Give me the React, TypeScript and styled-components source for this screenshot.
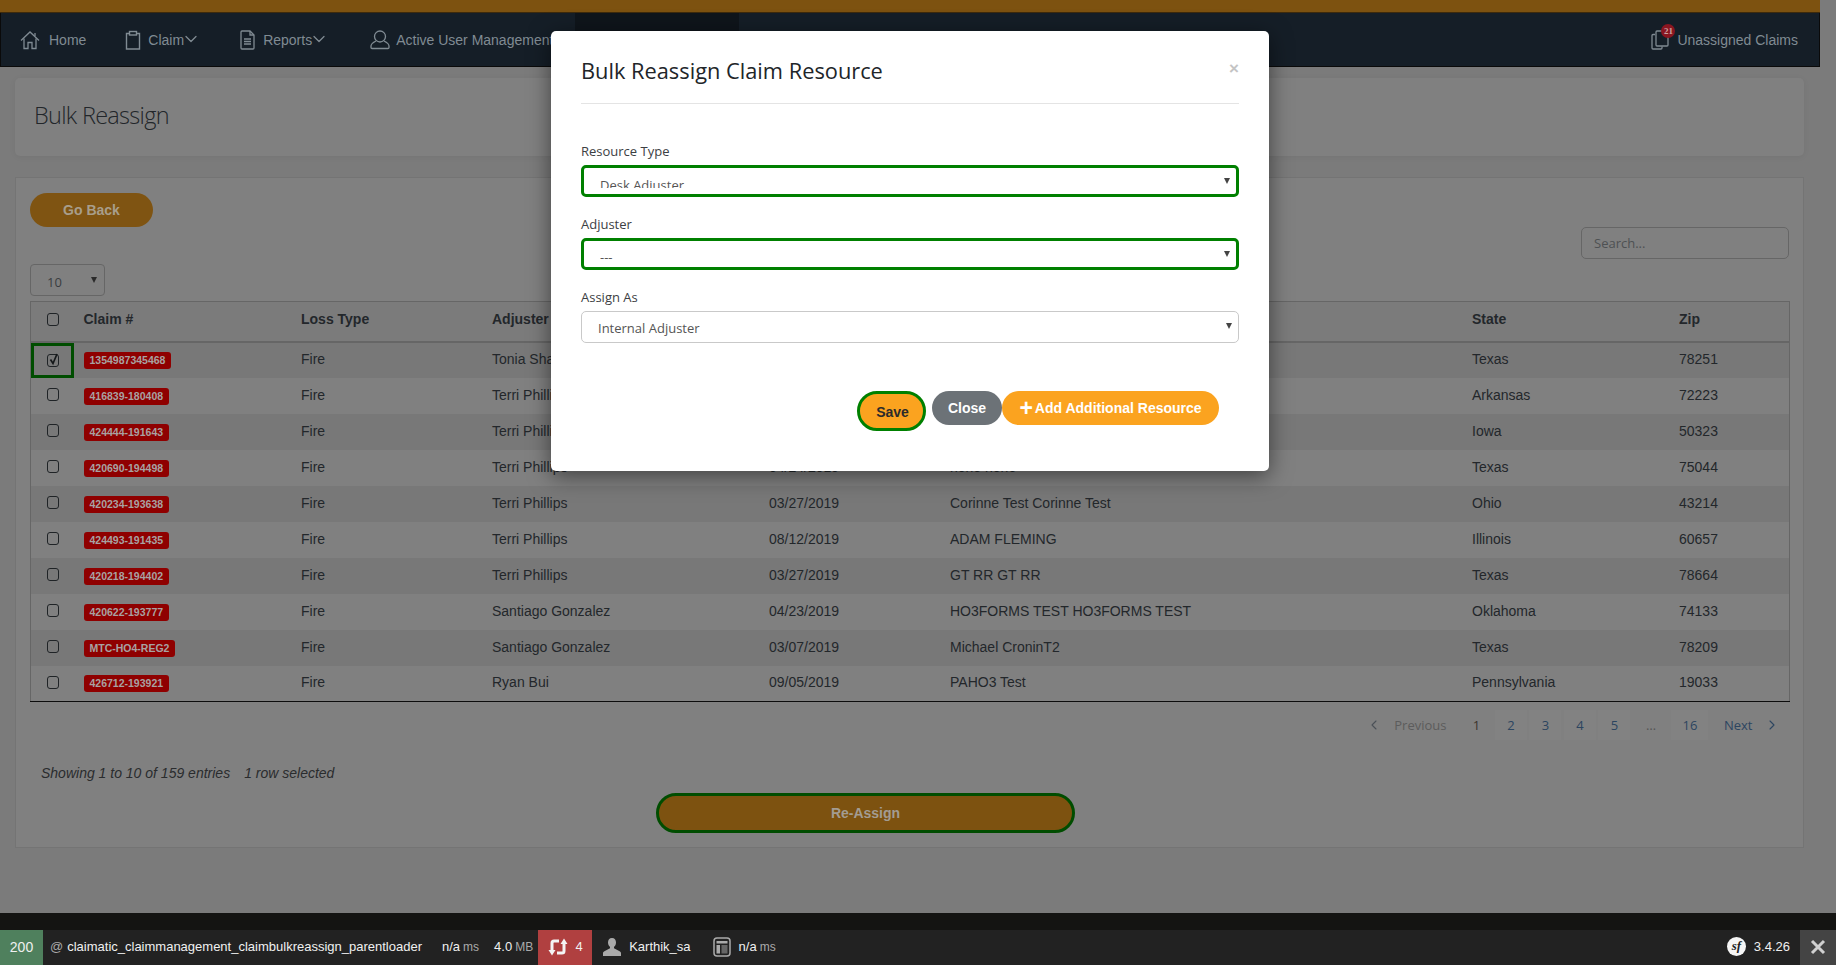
import React from "react";
import styled, { createGlobalStyle } from "styled-components";
import { ChevronDown, ChevronLeft, ChevronRight, FileCheck } from "lucide-react";

const Global = createGlobalStyle`
  html, body { margin: 0; padding: 0; height: 965px; overflow: hidden; background: #7b7b7b; }
  * { box-sizing: border-box; }
  body { font-family: "Liberation Sans", Arial, sans-serif; font-size: 14px; }
`;

const Page = styled.div`
  position: relative;
  width: 1836px;
  height: 965px;
  overflow: hidden;
  display: flex;
  flex-direction: column;
`;
const Underlay = styled.div`
  flex: 1;
  width: 1820px;
  display: flex;
  flex-direction: column;
`;
const TopStrip = styled.div`
  height: 13px;
  background: #7d5210;
  border-bottom: 1px solid #3d2a0c;
`;
const Nav = styled.nav`
  height: 54px;
  background: #151e27;
  border: 1px solid #0a0a0a;
  border-top: 0;
  display: flex;
  align-items: stretch;
  padding-left: 19px;
  color: #808b93;
`;
const NavItem = styled.div<{ $gap?: number; $active?: boolean; $width?: number }>`
  display: flex;
  align-items: center;
  white-space: nowrap;
  font-size: 14px;
  margin-left: ${(p) => p.$gap ?? 0}px;
  ${(p) => (p.$width ? `width: ${p.$width}px; flex: none;` : "")}
  ${(p) => (p.$active ? "background: #0f151b; padding-left: 31px; overflow: hidden;" : "")}
  svg { flex: none; }
`;
const NavLabel = styled.span<{ $left: number }>`
  margin-left: ${(p) => p.$left}px;
  margin-top: 1px;
`;
const NavChevron = styled(ChevronDown)`
  margin: -2px -5px 0 -3px;
`;
const ActiveIcon = styled.span`
  display: flex;
  color: #b07a20;
`;
const NavSpacer = styled.div`
  flex: 1;
`;
const ClaimsLink = styled.div`
  position: relative;
  display: flex;
  align-items: center;
  padding-right: 21px;
`;
const CountBadge = styled.span`
  position: absolute;
  left: 10px;
  top: 11px;
  width: 14px;
  height: 14px;
  border-radius: 50%;
  background: #8a1520;
  color: #c9a0a0;
  font: 700 9px/14px "Liberation Serif", serif;
  text-align: center;
`;

const Content = styled.main`
  flex: 1;
  padding: 11px 16px 0 15px;
  display: flex;
  flex-direction: column;
  gap: 21px;
`;
const TitleCard = styled.section`
  height: 78px;
  background: #808080;
  border-radius: 5px;
  box-shadow: 0 1px 6px rgba(0, 0, 0, 0.06);
  padding: 0 19px;
  display: flex;
  align-items: center;
`;
const PageTitle = styled.h1`
  margin: 0 0 5px;
  font: 300 23.5px "Open Sans", sans-serif;
  letter-spacing: -0.7px;
  color: #22262a;
`;
const MainCard = styled.section`
  height: 671px;
  background: #808080;
  border: 1px solid #747474;
  padding: 15px 14px 0;
  display: flex;
  flex-direction: column;
`;
const GoBack = styled.button`
  width: 123px;
  height: 34px;
  border: 0;
  border-radius: 17px;
  background: #7f5412;
  color: #a89e8b;
  font: 700 14px "Liberation Sans", sans-serif;
  padding: 0;
`;
const Filters = styled.div`
  display: flex;
  justify-content: space-between;
  align-items: flex-start;
  height: 74px;
`;
const Length = styled.div`
  position: relative;
  width: 75px;
  height: 32px;
  margin-top: 37px;
  border: 1px solid #666;
  border-radius: 4px;
  padding-left: 16px;
  font: 13px/34px "Open Sans", sans-serif;
  color: #3a3d40;
  &::after {
    content: "";
    position: absolute;
    right: 7px;
    top: 12px;
    border: 3px solid transparent;
    border-top: 6px solid #2a2a2a;
    border-bottom: 0;
  }
`;
const Search = styled.div`
  width: 208px;
  height: 32px;
  border: 1px solid #666;
  border-radius: 5px;
  padding-left: 12px;
  font: 13px/30px "Open Sans", sans-serif;
  color: #4e5153;
`;
const Table = styled.table`
  width: 1759px;
  table-layout: fixed;
  border-collapse: collapse;
  border: 1px solid #666;
  border-bottom: 1px solid #0c0c0c;
  color: #23272b;
  th, td { padding: 0 0 0 8.5px; text-align: left; white-space: nowrap; overflow: hidden; }
  th { height: 40px; padding-bottom: 5px; font-weight: 700; font-size: 14px; background: #7b7b7b; border-bottom: 2px solid #666; }
  td { height: 36px; padding-bottom: 2px; font-size: 14px; }
  th:nth-child(2), td:nth-child(2) { padding-left: 10px; }
  tbody tr:nth-child(odd) { background: #787878; }
  tbody tr:nth-child(even) { background: #808080; }
`;
const CheckCell = styled.td<{ $selected?: boolean }>`
  && { padding: 0 0 2px 16px; ${(p) => (p.$selected ? "box-shadow: inset 0 0 0 3px #004d00;" : "")} }
`;
const CheckHead = styled.th`
  && { padding: 0 0 3px 16px; }
`;
const Box = styled.span<{ $down?: number }>`
  display: block;
  position: relative;
  width: 12px;
  height: 13px;
  margin-top: ${(p) => p.$down ?? 0}px;
  border: 1px solid #1f2326;
  border-radius: 3px;
  svg { position: absolute; left: 0; top: -3px; }
`;
const ClaimBadge = styled.span`
  display: inline-block;
  margin-top: 3px;
  height: 17px;
  padding: 0 6px;
  border-radius: 3px;
  background: #8f0000;
  color: #a8a2a2;
  font: 700 10.5px/17px "Liberation Sans", sans-serif;
  vertical-align: middle;
`;
const Pager = styled.div`
  display: flex;
  justify-content: flex-end;
  align-items: center;
  height: 30px;
  margin-top: 8px;
  margin-right: 1.5px;
  font: 13px "Open Sans", sans-serif;
  color: #2c4560;
`;
const PagerCap = styled.span<{ $muted?: boolean }>`
  display: flex;
  align-items: center;
  gap: ${(p) => (p.$muted ? 12 : 11)}px;
  padding: ${(p) => (p.$muted ? "0 11.5px 0 8px" : "0 8px 0 13.5px")};
  height: 30px;
  color: ${(p) => (p.$muted ? "#5c5c5c" : "#2c4560")};
  margin-left: 2px;
  svg { color: ${(p) => (p.$muted ? "#4a5057" : "#2c4560")}; }
`;
const PageBtn = styled.span<{ $plain?: boolean; $current?: boolean; $w?: number }>`
  width: ${(p) => p.$w ?? 32}px;
  height: 30px;
  margin-left: 2.5px;
  line-height: 30px;
  text-align: center;
  background: ${(p) => (p.$plain ? "transparent" : "#828282")};
  color: ${(p) => (p.$current ? "#3a342c" : p.$plain ? "#555" : "#2c4560")};
`;
const Info = styled.div`
  margin-top: 25px;
  margin-left: 11px;
  font-style: italic;
  font-size: 14px;
  color: #2a2c2e;
  display: flex;
  gap: 14px;
`;
const ReassignRow = styled.div`
  padding-left: 626px;
  margin-top: 12px;
`;
const Reassign = styled.button`
  width: 419px;
  height: 40px;
  border: 3px solid #004d00;
  border-radius: 20px;
  background: #7d5210;
  color: #a39c92;
  font: 700 14px "Liberation Sans", sans-serif;
  padding: 0;
`;

const Debug = styled.footer`
  position: relative;
  z-index: 3;
  flex: none;
  height: 52px;
  border-top: 17px solid #141412;
  background: #222;
  display: flex;
  align-items: stretch;
  color: #f0f0f0;
  font-size: 13px;
`;
const Block = styled.div<{ $bg?: string; $w?: number; $left?: number }>`
  display: flex;
  align-items: center;
  justify-content: ${(p) => (p.$w ? "center" : "flex-start")};
  ${(p) => (p.$w ? `width: ${p.$w}px;` : "")}
  margin-left: ${(p) => p.$left ?? 0}px;
  padding-bottom: 2px;
  background: ${(p) => p.$bg ?? "transparent"};
  white-space: nowrap;
  gap: 8px;
`;
const StatusCode = styled(Block)`
  font-size: 14px;
`;
const Unit = styled.span`
  color: #aaa;
  font-size: 12px;
  margin-left: -5px;
`;
const At = styled.span`
  color: #aaa;
  margin-right: -4px;
`;
const SfLogo = styled.span`
  width: 19px;
  height: 19px;
  border-radius: 50%;
  background: #f5f5f5;
  color: #222;
  font: italic 700 13px/18px "Liberation Serif", serif;
  text-align: center;
`;
const Fill = styled.div`
  flex: 1;
`;

const Modal = styled.div`
  position: absolute;
  z-index: 5;
  left: 551px;
  top: 31px;
  width: 718px;
  height: 440px;
  background: #fff;
  border-radius: 5px;
  padding: 0 30px;
  box-shadow: 0 5px 22px rgba(0, 0, 0, 0.5);
`;
const ModalHead = styled.header`
  height: 73px;
  border-bottom: 1px solid #e4e4e4;
  display: flex;
  justify-content: space-between;
  align-items: flex-start;
`;
const ModalTitle = styled.h2`
  margin: 25px 0 0;
  font: 400 21.8px "Open Sans", sans-serif;
  color: #212529;
`;
const CloseX = styled.span`
  margin-top: 28px;
  color: #c4c4c4;
  font: 700 17px "Liberation Sans", sans-serif;
`;
const ModalBody = styled.div`
  padding-top: 40px;
  display: flex;
  flex-direction: column;
`;
const FieldLabel = styled.label`
  display: block;
  height: 21px;
  font: 13px/15px "Open Sans", sans-serif;
  color: #3c4043;
`;
const Field = styled.div`
  height: 73px;
`;
const SelectBox = styled.div<{ $focus?: boolean }>`
  position: relative;
  height: 32px;
  border-radius: 5px;
  border: ${(p) => (p.$focus ? "3px solid #008000" : "1px solid #c9c9c9")};
  padding-left: 16px;
  font: 13px "Open Sans", sans-serif;
  color: #555;
  &::after {
    content: "";
    position: absolute;
    right: 6px;
    top: ${(p) => (p.$focus ? "10px" : "11px")};
    border: 3px solid transparent;
    border-top: 6px solid #444;
    border-bottom: 0;
  }
`;
const SelectValue = styled.div<{ $clip?: boolean }>`
  line-height: 18px;
  padding-top: ${(p) => (p.$clip ? "8px" : "7px")};
  height: ${(p) => (p.$clip ? "20px" : "28px")};
  overflow: hidden;
`;
const ModalActions = styled.div`
  display: flex;
  align-items: flex-start;
  padding-left: 276px;
  margin-top: 28px;
`;
const Pill = styled.button<{ $bg: string; $color?: string; $w: number; $ring?: boolean; $left?: number }>`
  width: ${(p) => p.$w}px;
  height: ${(p) => (p.$ring ? 40 : 34)}px;
  margin-left: ${(p) => p.$left ?? 0}px;
  border: ${(p) => (p.$ring ? "3px solid #008000" : "0")};
  border-radius: 20px;
  background: ${(p) => p.$bg};
  color: ${(p) => p.$color ?? "#fff"};
  font: 700 14px "Liberation Sans", sans-serif;
  padding: ${(p) => (p.$ring ? "2px 0 0 2px" : "0")};
  flex: none;
  display: flex;
  align-items: center;
  justify-content: center;
  gap: 2px;
`;
const PlusMark = styled.span`
  font-size: 23px;
  line-height: 20px;
`;

const HomeIcon = () => (
  <svg width="20" height="20" viewBox="0 0 20 20" fill="none" stroke="currentColor" strokeWidth="1.3">
    <path d="M1 10.500 L10 2 L19 10.500" />
    <path d="M15 6 V3" />
    <path d="M4 8.500 V18.500 H8 V12.500 H12 V18.500 H16 V8.500" />
  </svg>
);
const ClipboardIcon = () => (
  <svg width="16" height="20" viewBox="0 0 16 20" fill="none" stroke="currentColor" strokeWidth="1.4">
    <path d="M4.500 3.500 H1.500 V19 H14.500 V3.500 H11.500" />
    <rect x="4.500" y="1.500" width="7" height="3.500" />
  </svg>
);
const ReportIcon = () => (
  <svg width="15" height="20" viewBox="0 0 15 20" fill="none" stroke="currentColor" strokeWidth="1.3">
    <path d="M2 1 H10 L14 5 V18 a1 1 0 0 1 -1 1 H2 a1 1 0 0 1 -1 -1 V2 a1 1 0 0 1 1 -1 Z" />
    <path d="M10 1 V5 H14" />
    <path d="M4 9 H11 M4 11.500 H11 M4 14 H11" strokeWidth="1.500" />
  </svg>
);
const PersonIcon = () => (
  <svg width="20" height="20" viewBox="0 0 20 20" fill="none" stroke="currentColor" strokeWidth="1.3">
    <circle cx="10" cy="6.500" r="5.500" />
    <path d="M6 11 C3 12.500 1 13.500 1 16 V17.500 a1 1 0 0 0 1 1 H18 a1 1 0 0 0 1 -1 V16 C19 13.500 17 12.500 14 11" />
  </svg>
);
const PagesIcon = ({ size = 20 }: { size?: number }) => (
  <svg width={size} height={size} viewBox="0 0 20 20" fill="none" stroke="currentColor" strokeWidth="1.300">
    <path d="M4 4.500 H2 a1 1 0 0 0 -1 1 V18 a1 1 0 0 0 1 1 H10 a1 1 0 0 0 1 -1 V16.500" />
    <rect x="5" y="1" width="12" height="15" rx="1" />
  </svg>
);

const rows = [
  ["1354987345468", "Tonia Shaw", "03/27/2019", "Tonia Test", "Texas", "78251"],
  ["416839-180408", "Terri Phillips", "04/24/2019", "none none", "Arkansas", "72223"],
  ["424444-191643", "Terri Phillips", "08/12/2019", "none none", "Iowa", "50323"],
  ["420690-194498", "Terri Phillips", "04/24/2019", "none none", "Texas", "75044"],
  ["420234-193638", "Terri Phillips", "03/27/2019", "Corinne Test Corinne Test", "Ohio", "43214"],
  ["424493-191435", "Terri Phillips", "08/12/2019", "ADAM FLEMING", "Illinois", "60657"],
  ["420218-194402", "Terri Phillips", "03/27/2019", "GT RR GT RR", "Texas", "78664"],
  ["420622-193777", "Santiago Gonzalez", "04/23/2019", "HO3FORMS TEST HO3FORMS TEST", "Oklahoma", "74133"],
  ["MTC-HO4-REG2", "Santiago Gonzalez", "03/07/2019", "Michael CroninT2", "Texas", "78209"],
  ["426712-193921", "Ryan Bui", "09/05/2019", "PAHO3 Test", "Pennsylvania", "19033"],
];
const widths = [43, 219, 191, 277, 181, 522, 207, 119];

export default function App() {
  return (
    <Page>
      <Global />
      <Underlay>
        <TopStrip />
        <Nav>
          <NavItem>
            <HomeIcon />
            <NavLabel $left={9}>Home</NavLabel>
          </NavItem>
          <NavItem $gap={39}>
            <ClipboardIcon />
            <NavLabel $left={7}>Claim</NavLabel>
            <NavChevron size={20} strokeWidth={1.5} />
          </NavItem>
          <NavItem $gap={44}>
            <ReportIcon />
            <NavLabel $left={8}>Reports</NavLabel>
            <NavChevron size={20} strokeWidth={1.5} />
          </NavItem>
          <NavItem $gap={46}>
            <PersonIcon />
            <NavLabel $left={6}>Active User Management</NavLabel>
          </NavItem>
          <NavItem $gap={22} $active $width={164}>
            <ActiveIcon>
              <PagesIcon size={18} />
            </ActiveIcon>
            <NavLabel $left={6}>Bulk Reassign</NavLabel>
          </NavItem>
          <NavItem $gap={34}>
            <FileCheck size={18} strokeWidth={1.3} />
            <NavLabel $left={6}>Audit</NavLabel>
          </NavItem>
          <NavSpacer />
          <ClaimsLink>
            <PagesIcon />
            <CountBadge>21</CountBadge>
            <NavLabel $left={6}>Unassigned Claims</NavLabel>
          </ClaimsLink>
        </Nav>
        <Content>
          <TitleCard>
            <PageTitle>Bulk Reassign</PageTitle>
          </TitleCard>
          <MainCard>
            <div>
              <GoBack>Go Back</GoBack>
            </div>
            <Filters>
              <Length>10</Length>
              <Search>Search...</Search>
            </Filters>
            <Table>
              <colgroup>
                {widths.map((w, i) => (
                  <col key={i} width={w} />
                ))}
              </colgroup>
              <thead>
                <tr>
                  <CheckHead>
                    <Box />
                  </CheckHead>
                  <th>Claim #</th>
                  <th>Loss Type</th>
                  <th>Adjuster</th>
                  <th>Loss Date</th>
                  <th>Insured</th>
                  <th>State</th>
                  <th>Zip</th>
                </tr>
              </thead>
              <tbody>
                {rows.map((r, i) => (
                  <tr key={r[0]}>
                    <CheckCell $selected={i === 0}>
                      <Box $down={i === 0 ? 3 : 0}>
                        {i === 0 && (
                          <svg width="12" height="14" viewBox="0 0 12 14" fill="none" stroke="#15181a" strokeWidth="1.700">
                            <path d="M2.500 7.500 L5 11.500 L9 2" />
                          </svg>
                        )}
                      </Box>
                    </CheckCell>
                    <td>
                      <ClaimBadge>{r[0]}</ClaimBadge>
                    </td>
                    <td>Fire</td>
                    <td>{r[1]}</td>
                    <td>{r[2]}</td>
                    <td>{r[3]}</td>
                    <td>{r[4]}</td>
                    <td>{r[5]}</td>
                  </tr>
                ))}
              </tbody>
            </Table>
            <Pager>
              <PagerCap $muted>
                <ChevronLeft size={16} strokeWidth={1.6} />
                Previous
              </PagerCap>
              <PageBtn $plain $current>1</PageBtn>
              <PageBtn>2</PageBtn>
              <PageBtn>3</PageBtn>
              <PageBtn>4</PageBtn>
              <PageBtn>5</PageBtn>
              <PageBtn $plain $w={36}>…</PageBtn>
              <PageBtn $w={37}>16</PageBtn>
              <PagerCap>
                Next
                <ChevronRight size={16} strokeWidth={1.6} />
              </PagerCap>
            </Pager>
            <Info>
              <span>Showing 1 to 10 of 159 entries</span>
              <span>1 row selected</span>
            </Info>
            <ReassignRow>
              <Reassign>Re-Assign</Reassign>
            </ReassignRow>
          </MainCard>
        </Content>
      </Underlay>
      <Debug>
        <StatusCode $bg="#4f805d" $w={43}>200</StatusCode>
        <Block $left={7}>
          <At>@</At>
          <span>claimatic_claimmanagement_claimbulkreassign_parentloader</span>
        </Block>
        <Block $left={20}>
          n/a <Unit>ms</Unit>
        </Block>
        <Block $left={15}>
          4.0 <Unit>MB</Unit>
        </Block>
        <Block $bg="#b04040" $w={54} $left={5}>
          <svg width="20" height="20" viewBox="0 0 20 20" fill="none" stroke="#f4f4f4">
            <path d="M11 4 H6 a2 2 0 0 0 -2 2 V14" strokeWidth="3" />
            <path d="M9 16 H14 a2 2 0 0 0 2 -2 V6" strokeWidth="3" />
            <path d="M0.500 13 H7.500 L4 18.500 Z M12.500 7 H19.500 L16 1.500 Z" fill="#f4f4f4" stroke="none" />
          </svg>
          4
        </Block>
        <Block $left={11}>
          <svg width="18" height="20" viewBox="0 0 18 20" fill="#aaa">
            <path d="M9 1c2.600 0 4 1.900 4 4.400 0 2-1 3.600-2 4.400v1.400l5.600 3c.9.500 1.400 1.100 1.400 2V19H0v-2.800c0-.9.500-1.500 1.400-2l5.600-3V9.800C6 9 5 7.400 5 5.400 5 2.900 6.400 1 9 1z" />
          </svg>
          <span>Karthik_sa</span>
        </Block>
        <Block $left={22}>
          <svg width="18" height="20" viewBox="0 0 18 20" fill="none" stroke="#aaa" strokeWidth="1.500">
            <rect x="1" y="1" width="16" height="18" rx="3" />
            <rect x="3.500" y="4" width="11" height="2.500" fill="#aaa" stroke="none" />
            <rect x="3.500" y="8" width="3.500" height="8.500" fill="#aaa" stroke="none" />
            <rect x="8.500" y="8" width="6" height="8.500" fill="#aaa" stroke="none" opacity="0.5" />
          </svg>
          <span>n/a</span>
          <Unit>ms</Unit>
        </Block>
        <Fill />
        <Block>
          <SfLogo>sf</SfLogo>
          <span>3.4.26</span>
        </Block>
        <Block $bg="#444" $w={36} $left={10}>
          <svg width="16" height="16" viewBox="0 0 16 16" stroke="#d0d0d0" strokeWidth="3">
            <path d="M2 2 L14 14 M14 2 L2 14" />
          </svg>
        </Block>
      </Debug>
      <Modal>
        <ModalHead>
          <ModalTitle>Bulk Reassign Claim Resource</ModalTitle>
          <CloseX>×</CloseX>
        </ModalHead>
        <ModalBody>
          <Field>
            <FieldLabel>Resource Type</FieldLabel>
            <SelectBox $focus>
              <SelectValue $clip>Desk Adjuster</SelectValue>
            </SelectBox>
          </Field>
          <Field>
            <FieldLabel>Adjuster</FieldLabel>
            <SelectBox $focus>
              <SelectValue>---</SelectValue>
            </SelectBox>
          </Field>
          <Field>
            <FieldLabel>Assign As</FieldLabel>
            <SelectBox>
              <SelectValue>Internal Adjuster</SelectValue>
            </SelectBox>
          </Field>
        </ModalBody>
        <ModalActions>
          <Pill $bg="#fba31f" $color="#2b2b2b" $w={69} $ring>Save</Pill>
          <Pill $bg="#6c7277" $w={70} $left={6}>Close</Pill>
          <Pill $bg="#fba31f" $w={217}>
            <PlusMark>+</PlusMark>
            Add Additional Resource
          </Pill>
        </ModalActions>
      </Modal>
    </Page>
  );
}
